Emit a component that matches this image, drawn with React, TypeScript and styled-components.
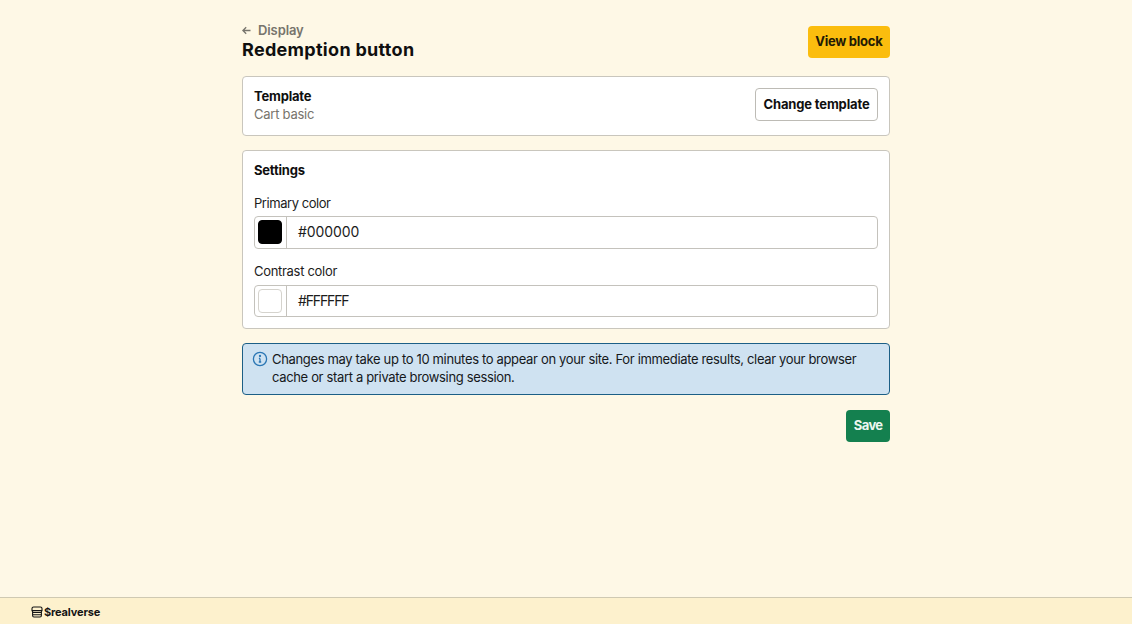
import { ReactElement } from 'react'
import styled, { createGlobalStyle } from 'styled-components'

const GlobalStyle = createGlobalStyle`
  html, body {
    margin: 0;
    height: 100%;
    background-color: #fef8e6;
    font-family: "Inter", "Liberation Sans", sans-serif;
    color: #0f0f0f;
  }
  * {
    box-sizing: border-box;
  }
`

const Page = styled.div`
  display: flex;
  flex-direction: column;
  height: 624px;
  overflow: hidden;
`

const Main = styled.main`
  flex: 1;
  width: 648px;
  margin: 0 auto;
  padding-top: 21px;
  display: flex;
  flex-direction: column;
`

const Header = styled.div`
  display: flex;
  justify-content: space-between;
  align-items: flex-start;
  height: 55px;
`

const BackLink = styled.div`
  display: flex;
  align-items: center;
  gap: 7px;
  height: 17px;
  font-size: 13px;
  font-weight: 600;
  letter-spacing: -0.1px;
  color: #77746c;
`

const BackArrow = styled.svg`
  margin-top: 1px;
`

const Title = styled.h1`
  margin: 1px 0 0;
  font-size: 18px;
  line-height: 22px;
  font-weight: 700;
  letter-spacing: 0.3px;
  color: #0f0f0f;
`

const Button = styled.button<{ $variant?: 'yellow' | 'green' | 'plain' }>`
  height: ${(p) => (p.$variant === 'plain' ? '33px' : '32px')};
  padding: 0 7.5px ${(p) => (p.$variant === 'plain' ? '1px' : '3px')};
  border-radius: 4px;
  font-family: inherit;
  font-size: 13px;
  font-weight: 700;
  letter-spacing: -0.15px;
  border: ${(p) => (p.$variant === 'plain' ? '1px solid #bdbbb5' : 'none')};
  background-color: ${(p) =>
    p.$variant === 'yellow' ? '#fbbd0e' : p.$variant === 'green' ? '#14804f' : '#ffffff'};
  color: ${(p) => (p.$variant === 'green' ? '#ecf6ef' : p.$variant === 'yellow' ? '#231a05' : '#0f0f0f')};
`

const ViewBlockButton = styled(Button)`
  margin-top: 5px;
  letter-spacing: -0.25px;
`

const SaveButton = styled(Button)`
  letter-spacing: -0.6px;
`

const Card = styled.section`
  background-color: #ffffff;
  border: 1px solid #c9c6bd;
  border-radius: 4px;
  padding: 10px 11px;
  margin-bottom: 14px;
`

const TemplateRow = styled(Card)`
  display: flex;
  justify-content: space-between;
  align-items: flex-start;
  height: 60px;
`

const ChangeButton = styled(Button)`
  margin-top: 1px;
`

const CardTitle = styled.div`
  font-size: 13px;
  line-height: 18px;
  font-weight: 700;
  letter-spacing: -0.2px;
`

const Muted = styled.div`
  font-size: 13px;
  line-height: 18px;
  letter-spacing: -0.25px;
  color: #77746c;
`

const SettingsCard = styled(Card)`
  height: 179px;
`

const FieldLabel = styled.label<{ $first?: boolean }>`
  display: block;
  margin-top: ${(p) => (p.$first ? '15px' : '13px')};
  margin-bottom: 4px;
  font-size: 13px;
  line-height: 18px;
  letter-spacing: ${(p) => (p.$first ? '-0.45px' : '-0.3px')};
  color: #1c1c1c;
`

const ColorField = styled.div<{ $short?: boolean }>`
  display: flex;
  height: ${(p) => (p.$short ? '32px' : '33px')};
  margin-top: ${(p) => (p.$short ? '5px' : '0')};
  border: 1px solid #c4c2bc;
  border-radius: 4px;
`

const SwatchBox = styled.div`
  width: 32px;
  flex: none;
  display: flex;
  align-items: center;
  padding: 0 0 1px 3px;
  border-right: 1px solid #c4c2bc;
`

const Swatch = styled.div<{ $color: string }>`
  width: 24px;
  height: 24px;
  border-radius: 4px;
  background-color: ${(p) => p.$color};
  border: 1px solid ${(p) => (p.$color === '#000000' ? '#000000' : '#d5d3cd')};
`

const ColorValue = styled.div<{ $narrow?: boolean }>`
  display: flex;
  align-items: center;
  padding: 0 0 2px 11px;
  font-size: 14px;
  letter-spacing: ${(p) => (p.$narrow ? '-1.15px' : '-0.1px')};
  color: #1c1c1c;
`

const Banner = styled.div`
  display: flex;
  gap: 4px;
  height: 52px;
  padding: 6px 9px;
  margin-bottom: 15px;
  background-color: #cfe2f1;
  border: 1px solid #1c5f86;
  border-radius: 4px;
  font-size: 13px;
  line-height: 18px;
  letter-spacing: -0.34px;
  color: #15181b;
`

const BannerIcon = styled.svg`
  flex: none;
  margin-top: 1px;
`

const Actions = styled.div`
  display: flex;
  justify-content: flex-end;
`

const Footer = styled.footer`
  height: 27px;
  flex: none;
  display: flex;
  align-items: center;
  gap: 1px;
  padding: 1px 0 0 31px;
  background-color: #fdf1cd;
  border-top: 1px solid #cfc9b2;
  font-size: 11px;
  font-weight: 700;
  letter-spacing: -0.15px;
  color: #141414;
`

const ArrowLeft = (): ReactElement => (
  <BackArrow width="9" height="9" viewBox="0 0 9 9" fill="none" stroke="#77746c" strokeWidth="1.3">
    <path d="M8.5 4.5H1M4.2 1.2 0.9 4.5l3.3 3.3" />
  </BackArrow>
)

const InfoIcon = (): ReactElement => (
  <BannerIcon width="16" height="16" viewBox="0 0 16 16" fill="none" stroke="#2a76b4" strokeWidth="1.3">
    <circle cx="8" cy="8" r="6.6" />
    <path d="M8 7.4v3.6M6.8 11h2.4M6.9 7.4H8" />
    <circle cx="8" cy="5" r="0.5" fill="#2a76b4" />
  </BannerIcon>
)

const StoreIcon = (): ReactElement => (
  <svg width="12" height="12" viewBox="0 0 12 12" fill="none" stroke="#141414" strokeWidth="1.1">
    <path d="M2.6 1h6.8c.9 0 1.6.7 1.6 1.6v2H1v-2C1 1.700 1.700 1 2.600 1zM1 4.600h10M1.600 4.600v1.900h8.800V4.600M1.600 6.500v3.100c0 .8.600 1.400 1.400 1.400h6c.8 0 1.400-.6 1.400-1.400V6.500M1.600 8.700h8.800" />
  </svg>
)

export default function App(): ReactElement {
  return (
    <>
      <GlobalStyle />
      <Page>
        <Main>
          <Header>
            <div>
              <BackLink>
                <ArrowLeft />
                Display
              </BackLink>
              <Title>Redemption button</Title>
            </div>
            <ViewBlockButton $variant="yellow">View block</ViewBlockButton>
          </Header>
          <TemplateRow>
            <div>
              <CardTitle>Template</CardTitle>
              <Muted>Cart basic</Muted>
            </div>
            <ChangeButton $variant="plain">Change template</ChangeButton>
          </TemplateRow>
          <SettingsCard>
            <CardTitle>Settings</CardTitle>
            <FieldLabel $first>Primary color</FieldLabel>
            <ColorField>
              <SwatchBox>
                <Swatch $color="#000000" />
              </SwatchBox>
              <ColorValue>#000000</ColorValue>
            </ColorField>
            <FieldLabel>Contrast color</FieldLabel>
            <ColorField $short>
              <SwatchBox>
                <Swatch $color="#ffffff" />
              </SwatchBox>
              <ColorValue $narrow>#FFFFFF</ColorValue>
            </ColorField>
          </SettingsCard>
          <Banner>
            <InfoIcon />
            <div>
              Changes may take up to 10 minutes to appear on your site. For immediate results, clear your browser cache
              or start a private browsing session.
            </div>
          </Banner>
          <Actions>
            <SaveButton $variant="green">Save</SaveButton>
          </Actions>
        </Main>
        <Footer>
          <StoreIcon />
          $realverse
        </Footer>
      </Page>
    </>
  )
}
